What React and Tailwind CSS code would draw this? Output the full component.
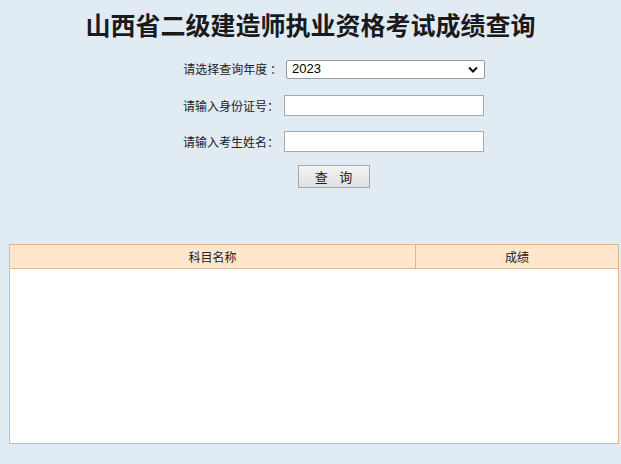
export default function App() {
  const cjk = { fontFamily: '"Noto Sans CJK SC", "Liberation Sans", sans-serif' };
  return (
    <div className="w-[621px] h-[464px] bg-[#e1ebf4] overflow-hidden" style={cjk}>
      <div className="pt-[8px] h-[40px] flex justify-center">
        <h1 className="text-[25px] leading-[32px] font-bold text-[#1a1a1a] tracking-[0px]" style={{ fontFamily: '"Noto Sans CJK SC", serif' }}>
          山西省二级建造师执业资格考试成绩查询
        </h1>
      </div>
      <div className="grid grid-cols-[284px_210px] gap-y-[15px] mt-[19px] text-[12px] text-[#222] items-center">
        <div className="text-right pr-[2px] leading-[20px]">请选择查询年度 ：</div>
        <div className="pl-[2px]">
          <div className="w-[199px] h-[19px] bg-white border border-[#9a9a9a] rounded-[2px] flex items-center justify-between pl-[5px] pr-[6px]">
            <span className="text-[13px] text-black" style={{ fontFamily: '"Liberation Sans", sans-serif' }}>2023</span>
            <svg width="10" height="7" viewBox="0 0 10 7"><path d="M1 1.5 L5 5.5 L9 1.5" stroke="#111" strokeWidth="2" fill="none" /></svg>
          </div>
        </div>
        <div className="text-right pr-[5px] leading-[20px] mt-[1px]">请输入身份证号：</div>
        <div className="mt-[1px]">
          <div className="w-[200px] h-[21px] bg-white border border-[#a9a9a9]"></div>
        </div>
        <div className="text-right pr-[5px] leading-[20px]">请输入考生姓名：</div>
        <div>
          <div className="w-[200px] h-[21px] bg-white border border-[#a9a9a9]"></div>
        </div>
      </div>
      <div className="flex justify-center mt-[13px] pl-[46px]">
        <button className="w-[72px] h-[23px] border border-[#a8a8a8] bg-gradient-to-b from-[#f4f4f4] to-[#e0e0e0] text-[13px] text-[#222] tracking-[0px]">
          查&nbsp;&nbsp;&nbsp;&nbsp;询
        </button>
      </div>
      <div className="mx-[9px] mt-[56px] w-[610px] h-[200px] border border-[#dcb894] bg-white flex flex-col">
        <div className="flex h-[24px] bg-[#ffe6cc] border-b border-[#dcb894] text-[12px] text-[#222]">
          <div className="w-[406px] border-r border-[#dcb894] flex items-center justify-center">科目名称</div>
          <div className="flex-1 flex items-center justify-center">成绩</div>
        </div>
        <div className="flex-1 bg-white"></div>
      </div>
    </div>
  );
}
